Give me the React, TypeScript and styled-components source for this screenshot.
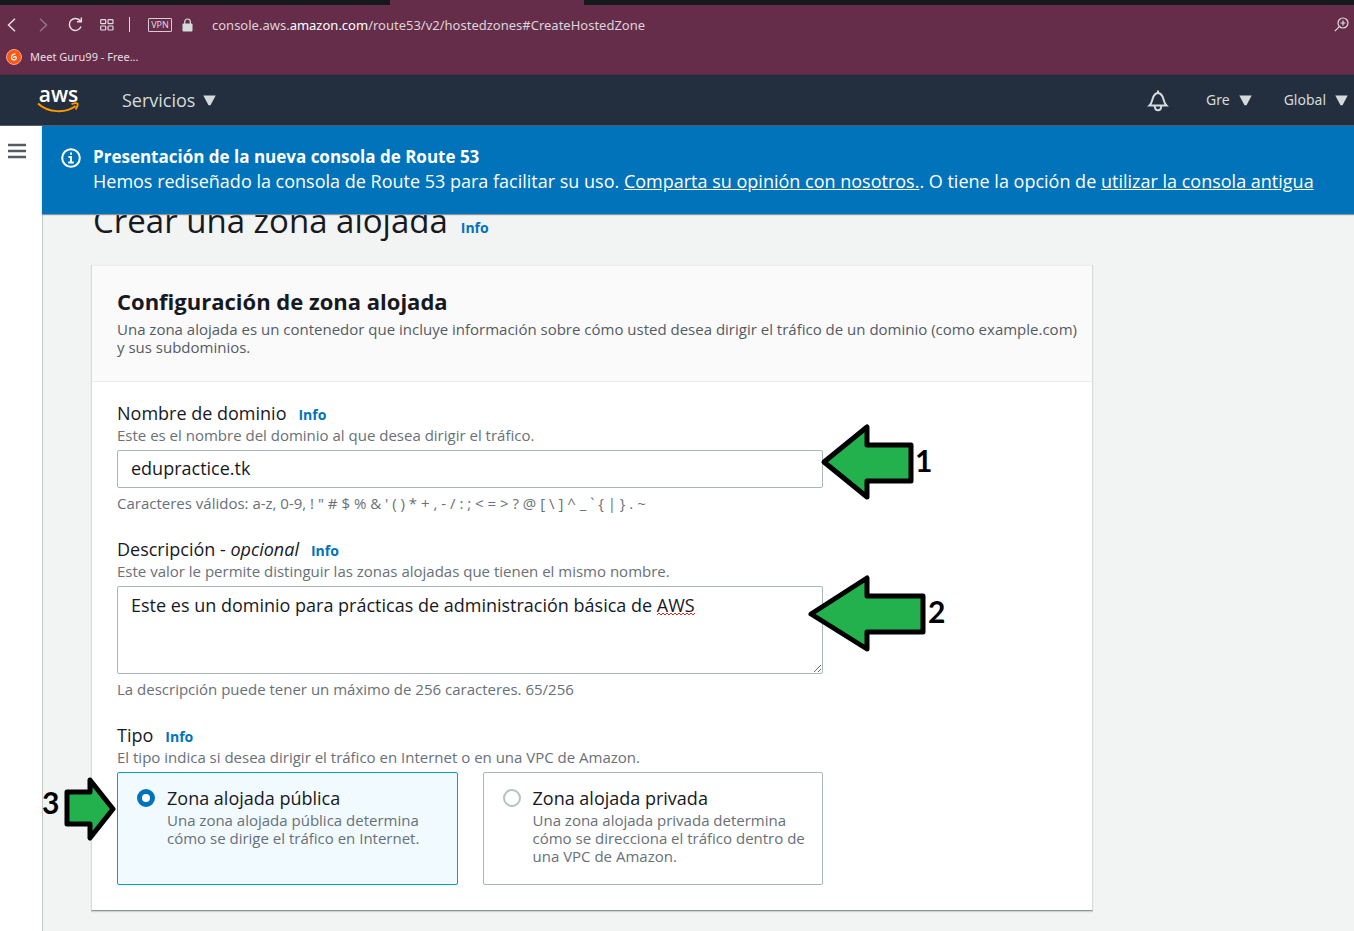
import React, { useState } from 'react';
import styled, { createGlobalStyle } from 'styled-components';

const GlobalStyle = createGlobalStyle`
  *, *::before, *::after { box-sizing: border-box; }
  body {
    margin: 0;
    background: #f2f3f3;
    color: #16191f;
    font-family: "Open Sans", "Noto Sans", sans-serif;
    font-size: 15px;
    line-height: 18px;
  }
  button, input, textarea { font: inherit; color: inherit; }
  h1, h2, p { margin: 0; }
`;

const Page = styled.div`
  display: flex;
  flex-direction: column;
  min-height: 100vh;
  overflow: hidden;
`;

/* Browser frame */
const TabStrip = styled.div`
  height: 5px;
  background: #15191c;
  padding-left: 390px;
`;
const ActiveTab = styled.div`
  width: 194px;
  height: 5px;
  background: #662d4a;
`;
const BrowserBar = styled.div`
  background: #662d4a;
  color: #e0dde0;
  border-bottom: 1px solid #522b42;
`;
const AddressRow = styled.div`
  display: flex;
  align-items: center;
  height: 39px;
  padding: 0 0 0 4px;
`;
const IconButton = styled.button<{ $dim?: boolean; $narrow?: boolean }>`
  display: flex;
  align-items: center;
  justify-content: center;
  width: ${(p) => (p.$narrow ? 26 : 32)}px;
  height: 24px;
  flex: none;
  padding: 0;
  border: 0;
  background: none;
  color: inherit;
  opacity: ${(p) => (p.$dim ? 0.4 : 1)};
`;
const BackForward = styled.div`
  display: flex;
  margin-left: -9px;
`;
const Divider = styled.span`
  width: 1px;
  height: 15px;
  margin: 0 18px 0 6px;
  background: #e0dde0;
`;
const VpnBadge = styled.span`
  width: 24px;
  height: 14px;
  border: 1px solid #d5cdd2;
  border-radius: 1px;
  font-size: 9px;
  line-height: 12px;
  text-align: center;
`;
const LockIcon = styled.svg`
  margin: 0 19px 0 10px;
  flex: none;
`;
const Address = styled.span`
  flex: 1;
  font-family: "Noto Sans", sans-serif;
  font-size: 13px;
  white-space: nowrap;
  color: #dcd3d9;
  b { font-weight: 400; color: #fff; }
`;
const BookmarkRow = styled.div`
  display: flex;
  height: 30px;
  padding: 5px 6px 0;
`;
const Bookmark = styled.a`
  display: flex;
  align-items: flex-start;
  gap: 8px;
  color: #e6dfe3;
  text-decoration: none;
  font-family: "Noto Sans", sans-serif;
  font-size: 11px;
  line-height: 16px;
`;

/* Console header */
const ConsoleHeader = styled.header`
  display: flex;
  align-items: center;
  height: 51px;
  padding: 0 6px 0 37px;
  background: #232f3e;
  border-bottom: 1px solid #545b64;
  color: #d5dbdb;
`;
const Brand = styled.a`
  display: flex;
  flex-direction: column;
  align-items: center;
  width: 43px;
  margin-right: 42px;
  padding-bottom: 2px;
  color: #fff;
  text-decoration: none;
  font-size: 21px;
  font-weight: 600;
  line-height: 16px;
`;
const NavButton = styled.button<{ $large?: boolean }>`
  display: flex;
  align-items: center;
  gap: ${(p) => (p.$large ? 8 : 9)}px;
  padding: 0;
  border: 0;
  background: none;
  font-family: ${(p) => (p.$large ? '"Open Sans"' : '"Noto Sans"')}, sans-serif;
  font-size: ${(p) => (p.$large ? 18 : 14)}px;
  line-height: 24px;
`;
const NavRight = styled.div`
  display: flex;
  align-items: center;
  gap: 32px;
  margin-left: auto;
`;

/* Shell */
const Shell = styled.div`
  display: flex;
  flex: 1;
`;
const Sidebar = styled.aside`
  width: 43px;
  flex: none;
  padding: 13px 0 0 1px;
  background: #fff;
  border-right: 1px solid #c4c8ca;
`;
const Main = styled.main`
  flex: 1;
  min-width: 0;
  margin-left: -1px;
`;
const Banner = styled.section`
  position: relative;
  z-index: 1;
  display: flex;
  gap: 12px;
  min-height: 88px;
  padding: 18px 19px 0;
  background: #0073bb;
  color: #fff;
  font-size: 18px;
  line-height: 25px;
  box-shadow: 0 1px 1px #8d9498;
  a { color: inherit; }
  svg { flex: none; margin-top: 4px; }
`;
const BannerTitle = styled.h2`
  font-size: 17px;
  line-height: 25px;
  font-weight: 700;
`;
const Content = styled.div`
  padding: 0 49px 20px;
`;
const PageTitle = styled.h1`
  display: flex;
  align-items: baseline;
  gap: 13px;
  margin-top: -13px;
  padding-left: 2px;
  font-size: 33px;
  line-height: 40px;
  font-weight: 400;
`;
const InfoLink = styled.a`
  color: #0073bb;
  font-size: 14px;
  line-height: 18px;
  font-weight: 700;
  text-decoration: none;
`;

const Card = styled.section`
  max-width: 1002px;
  margin-top: 24px;
  background: #fff;
  border: 1px solid #d5dbdb;
  border-top-color: #eaeded;
  border-bottom-color: #879596;
  box-shadow: 0 1px 1px #d0d4d6;
`;
const CardHeader = styled.header`
  padding: 21px 8px 25px 25px;
  background: #fafafa;
  border-bottom: 1px solid #eaeded;
  color: #545b64;
`;
const CardTitle = styled.h2`
  margin-bottom: 5px;
  color: #16191f;
  font-size: 22px;
  line-height: 28px;
  font-weight: 700;
`;
const Form = styled.form`
  display: flex;
  flex-direction: column;
  gap: 26px;
  max-width: 756px;
  padding: 20px 25px 25px;
`;
const Field = styled.div`
  display: flex;
  flex-direction: column;
  gap: 6px;
`;
const LabelRow = styled.div`
  display: flex;
  align-items: baseline;
  gap: 12px;
  height: 22px;
  font-size: 18px;
  line-height: 22px;
`;
const FieldHead = styled.div`
  display: flex;
  flex-direction: column;
  gap: 2px;
`;
const Hint = styled.p`
  color: #687078;
`;
const Control = styled.div`
  position: relative;
  display: flex;
`;
const TextInput = styled.input`
  width: 100%;
  height: 38px;
  padding: 0 13px 2px;
  border: 1px solid #aab7b8;
  border-radius: 2px;
  background: #fff;
  font-size: 18px;
  outline: none;
`;
const TextArea = styled.textarea`
  width: 100%;
  height: 88px;
  padding: 7px 13px;
  border: 1px solid #aab7b8;
  border-radius: 2px;
  background: #fff;
  font-size: 18px;
  line-height: 22px;
  outline: none;
`;
const SpellingMark = styled.svg`
  position: absolute;
  left: 540px;
  top: 26px;
`;
const Tiles = styled.div`
  position: relative;
  display: grid;
  grid-template-columns: repeat(2, minmax(0, 1fr));
  gap: 25px;
`;
const Tile = styled.label<{ $selected: boolean }>`
  display: grid;
  grid-template-columns: 18px 1fr;
  column-gap: 12px;
  align-items: start;
  padding: 14px 19px 19px;
  border: 1px solid ${(p) => (p.$selected ? '#00a1c9' : '#aab7b8')};
  border-radius: 2px;
  background: ${(p) => (p.$selected ? '#f1faff' : '#fff')};
`;
const Radio = styled.input`
  appearance: none;
  width: 18px;
  height: 18px;
  margin: 2px 0 0;
  border: 2px solid #b5c0c1;
  border-radius: 50%;
  background: #fff;
  &:checked { border: 5px solid #0073bb; }
`;
const TileText = styled.span`
  display: flex;
  flex-direction: column;
  gap: 2px;
  color: #687078;
  white-space: nowrap;
`;
const TileTitle = styled.span`
  color: #16191f;
  font-size: 18px;
  line-height: 22px;
`;

/* Numbered pointers drawn over the form */
const Pointer = styled.div<{ $x: number; $y: number }>`
  position: absolute;
  left: ${(p) => p.$x}px;
  top: ${(p) => p.$y}px;
  display: flex;
  align-items: flex-start;
  gap: 1px;
  color: #000;
  font-family: Lato, "Open Sans", sans-serif;
  font-size: 30px;
  line-height: 74px;
  font-weight: 700;
  pointer-events: none;
  svg { flex: none; }
`;
const StartPointer = styled(Pointer)`
  gap: 2px;
  line-height: 52px;
`;

const Caret = () => (
  <svg width="13" height="11" viewBox="0 0 13 11" aria-hidden="true">
    <path d="M.3.5h12.4L7.5 10.2h-2z" fill="currentColor" />
  </svg>
);

const Arrow = ({ width, height, points }: { width: number; height: number; points: string }) => (
  <svg width={width} height={height} aria-hidden="true">
    <polygon points={points} fill="#22b14c" stroke="#000" strokeWidth="5" strokeLinejoin="round" />
  </svg>
);

const Info = () => <InfoLink href="#info">Info</InfoLink>;

const zones = [
  { id: 'public', title: 'Zona alojada pública', lines: ['Una zona alojada pública determina', 'cómo se dirige el tráfico en Internet.'] },
  { id: 'private', title: 'Zona alojada privada', lines: ['Una zona alojada privada determina', 'cómo se direcciona el tráfico dentro de', 'una VPC de Amazon.'] },
];

export default function App() {
  const [zone, setZone] = useState('public');
  return (
    <Page>
      <GlobalStyle />
      <TabStrip><ActiveTab /></TabStrip>
      <BrowserBar>
        <AddressRow>
          <BackForward>
            <IconButton aria-label="Atrás">
              <svg width="9" height="14" fill="none" stroke="currentColor" strokeWidth="1.5"><path d="M8 .7 1.5 7 8 13.3" /></svg>
            </IconButton>
            <IconButton aria-label="Adelante" $dim>
              <svg width="9" height="14" fill="none" stroke="currentColor" strokeWidth="1.5"><path d="M1 .7 7.5 7 1 13.3" /></svg>
            </IconButton>
          </BackForward>
          <IconButton aria-label="Recargar">
            <svg width="15" height="15" fill="none" stroke="currentColor" strokeWidth="1.5"><path d="M12.3 4A6 6 0 1 0 13 9.5M13.3 .5v4.2H9" /></svg>
          </IconButton>
          <IconButton aria-label="Inicio rápido">
            <svg width="14" height="12" fill="none" stroke="currentColor" strokeWidth="1.2"><rect x=".7" y=".7" width="5" height="4" rx=".8" /><rect x="8" y=".7" width="5" height="4" rx=".8" /><rect x=".7" y="7" width="5" height="4" rx=".8" /><rect x="8" y="7" width="5" height="4" rx=".8" /></svg>
          </IconButton>
          <Divider />
          <VpnBadge>VPN</VpnBadge>
          <LockIcon width="11" height="14" aria-hidden="true">
            <path d="M2.7 6V3.8a2.8 2.8 0 0 1 5.6 0V6" fill="none" stroke="#d5dbdb" strokeWidth="1.2" />
            <rect x=".5" y="5.5" width="10" height="8" rx="1" fill="#d5dbdb" />
          </LockIcon>
          <Address>console.aws.<b>amazon.com</b>/route53/v2/hostedzones#CreateHostedZone</Address>
          <IconButton aria-label="Zoom" $narrow>
            <svg width="15" height="15" fill="none" stroke="currentColor" strokeWidth="1.2"><circle cx="9" cy="6" r="5" /><path d="M5.3 9.7 .8 14.2M9 3.5v5M6.5 6h5" /></svg>
          </IconButton>
        </AddressRow>
        <BookmarkRow>
          <Bookmark href="#guru99">
            <svg width="16" height="16" aria-hidden="true">
              <circle cx="8" cy="8" r="7.5" fill="#fb5a16" stroke="#f5a58c" />
              <path d="M9.5 4.8C7.200 5 5.500 6.500 5.500 8.700c0 2.800 4.800 2.800 4.800.3C10.300 7.200 7.600 7.200 7.600 9" fill="none" stroke="#fff" strokeWidth="1.2" />
            </svg>
            Meet Guru99 - Free...
          </Bookmark>
        </BookmarkRow>
      </BrowserBar>

      <ConsoleHeader>
        <Brand href="#aws">
          aws
          <svg width="43" height="11" aria-hidden="true" fill="none" stroke="#ff9900" strokeWidth="2">
            <path d="M1 1.5C11 11 29 11.5 38.5 4" />
            <path d="M34.5 2.2c3-1 5.5-1 6-.5s-.2 3.2-2 5.8" strokeWidth="1.8" />
          </svg>
        </Brand>
        <NavButton $large>Servicios <Caret /></NavButton>
        <NavRight>
          <IconButton aria-label="Notificaciones">
            <svg width="22" height="24" viewBox="0 0 22 24" fill="none" stroke="currentColor" strokeWidth="2">
              <path d="M11 2.500v2.500M2.500 17.500C5.500 14.500 5 11.500 6.500 8.500 7.700 6.200 9.300 5 11 5s3.300 1.200 4.500 3.500c1.500 3 1 6 4 9zM7.800 18c0 5.700 6.400 5.700 6.400 0" />
            </svg>
          </IconButton>
          <NavButton>Gre <Caret /></NavButton>
          <NavButton>Global <Caret /></NavButton>
        </NavRight>
      </ConsoleHeader>

      <Shell>
        <Sidebar>
          <IconButton aria-label="Abrir navegación">
            <svg width="18" height="16" stroke="#545b64" strokeWidth="2.4"><path d="M0 2h18M0 8h18M0 14h18" /></svg>
          </IconButton>
        </Sidebar>
        <Main>
          <Banner>
            <svg width="20" height="20" fill="none" stroke="#fff" strokeWidth="2" aria-hidden="true">
              <circle cx="10" cy="10" r="8.8" />
              <path d="M10 4.5v2.2M7.5 9H10v5M7.2 14.5h5.6" />
            </svg>
            <div>
              <BannerTitle>Presentación de la nueva consola de Route 53</BannerTitle>
              <p>
                Hemos rediseñado la consola de Route 53 para facilitar su uso. <a href="#opinion">Comparta su opinión con nosotros.</a>. O tiene la opción de <a href="#antigua">utilizar la consola antigua</a>
              </p>
            </div>
          </Banner>
          <Content>
            <PageTitle>Crear una zona alojada <Info /></PageTitle>
            <Card>
              <CardHeader>
                <CardTitle>Configuración de zona alojada</CardTitle>
                <p>Una zona alojada es un contenedor que incluye información sobre cómo usted desea dirigir el tráfico de un dominio (como example.com) y sus subdominios.</p>
              </CardHeader>
              <Form>
                <Field>
                  <FieldHead>
                    <LabelRow><label htmlFor="domain">Nombre de dominio</label><Info /></LabelRow>
                    <Hint>Este es el nombre del dominio al que desea dirigir el tráfico.</Hint>
                  </FieldHead>
                  <Control>
                    <TextInput id="domain" type="text" defaultValue="edupractice.tk" />
                    <Pointer $x={703} $y={-27}>
                      <Arrow width={94} height={78} points="4,39 47,4 47,22 91,22 91,58 47,58 47,74" />1
                    </Pointer>
                  </Control>
                  <Hint>{'Caracteres válidos: a-z, 0-9, ! " # $ % & \' ( ) * + , - / : ; < = > ? @ [ \\ ] ^ _ ` { | } . ~'}</Hint>
                </Field>
                <Field>
                  <FieldHead>
                    <LabelRow><label htmlFor="description">Descripción - <i>opcional</i></label><Info /></LabelRow>
                    <Hint>Este valor le permite distinguir las zonas alojadas que tienen el mismo nombre.</Hint>
                  </FieldHead>
                  <Control>
                    <TextArea id="description" spellCheck={false} defaultValue="Este es un dominio para prácticas de administración básica de AWS" />
                    <SpellingMark width="38" height="4" aria-hidden="true">
                      <path d="M0 3l2-2 2 2 2-2 2 2 2-2 2 2 2-2 2 2 2-2 2 2 2-2 2 2 2-2 2 2 2-2 2 2 2-2 2 2 2-2" fill="none" stroke="#e0242c" />
                    </SpellingMark>
                    <Pointer $x={689} $y={-12}>
                      <Arrow width={121} height={78} points="5,40 61,4 61,22 117,22 117,58 61,58 61,75" />2
                    </Pointer>
                  </Control>
                  <Hint>La descripción puede tener un máximo de 256 caracteres. 65/256</Hint>
                </Field>
                <Field role="radiogroup" aria-labelledby="type-label">
                  <FieldHead>
                    <LabelRow><span id="type-label">Tipo</span><Info /></LabelRow>
                    <Hint>El tipo indica si desea dirigir el tráfico en Internet o en una VPC de Amazon.</Hint>
                  </FieldHead>
                  <Tiles>
                    {zones.map((z) => (
                      <Tile key={z.id} $selected={zone === z.id}>
                        <Radio type="radio" name="zone" checked={zone === z.id} onChange={() => setZone(z.id)} />
                        <TileText>
                          <TileTitle>{z.title}</TileTitle>
                          <span>{z.lines.map((line) => <React.Fragment key={line}>{line}<br /></React.Fragment>)}</span>
                        </TileText>
                      </Tile>
                    ))}
                    <StartPointer $x={-75} $y={4}>
                      3<Arrow width={55} height={66} points="6,16 29,16 29,4 52,33 29,62 29,48 6,48" />
                    </StartPointer>
                  </Tiles>
                </Field>
              </Form>
            </Card>
          </Content>
        </Main>
      </Shell>
    </Page>
  );
}
